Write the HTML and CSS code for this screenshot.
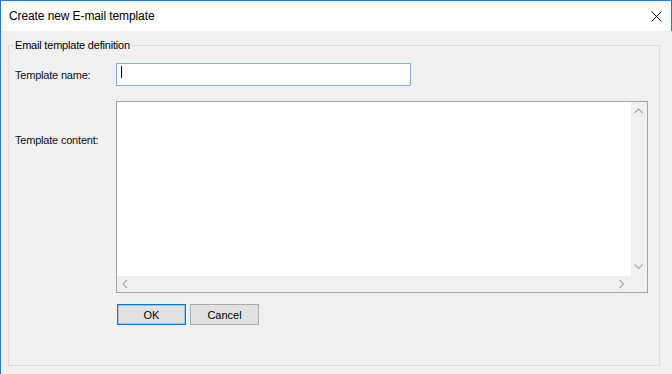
FILE: index.html
```html
<!DOCTYPE html>
<html lang="en">
<head>
  <meta charset="UTF-8">
  <meta name="viewport" content="width=device-width, initial-scale=1.0">
  <title>Create new E-mail template</title>
  <link rel="stylesheet" href="styles.css">
</head>
<body>
  <div class="window">
    <div class="titlebar">
      <span class="title">Create new E-mail template</span>
      <svg class="close" width="11" height="11" viewBox="0 0 11 11">
        <path d="M0.5 0.5 L10.5 10.5 M10.5 0.5 L0.5 10.5" stroke="#000" stroke-width="1" fill="none"/>
      </svg>
    </div>

    <div class="client">
      <div class="group">
        <div class="legend">Email template definition</div>

        <div class="form">
          <label class="label name-label" for="templateName">Template name:</label>
          <div class="textbox" id="templateName"><span class="caret"></span></div>

          <label class="label content-label">Template content:</label>
          <div class="editor">
            <div class="editor-text"></div>
            <div class="vscroll">
              <svg width="16" height="16" viewBox="0 0 16 16">
                <polyline points="3.5 11 7.5 7 11.5 11" class="arrow"/>
              </svg>
              <svg width="16" height="16" viewBox="0 0 16 16">
                <polyline points="3.5 4.5 7.5 8.5 11.5 4.5" class="arrow"/>
              </svg>
            </div>
            <div class="hscroll">
              <svg width="16" height="16" viewBox="0 0 16 16">
                <polyline points="10 4 6 8 10 12" class="arrow"/>
              </svg>
              <svg width="16" height="16" viewBox="0 0 16 16">
                <polyline points="4.5 4 8.5 8 4.5 12" class="arrow"/>
              </svg>
            </div>
            <div class="corner"></div>
          </div>

          <div class="buttons">
            <button class="btn btn-default">OK</button>
            <button class="btn">Cancel</button>
          </div>
        </div>
      </div>
    </div>
  </div>
</body>
</html>
```

FILE: styles.css
```css
* {
  margin: 0;
  padding: 0;
  box-sizing: border-box;
}

html, body {
  background-color: #f0f0f0;
}

body {
  font-family: "Segoe UI", "Liberation Sans", Arial, sans-serif;
  color: #000;
}

.window {
  width: 672px;
  height: 374px;
  border-top: 1px solid #1c7fd6;
  border-left: 1px solid #1c7fd6;
  display: flex;
  flex-direction: column;
}

.titlebar {
  height: 30px;
  background-color: #fff;
  border-right: 1px solid #1c7fd6;
  display: flex;
  align-items: center;
  justify-content: space-between;
  padding-left: 8px;
  padding-right: 9px;
}

.title {
  font-size: 12px;
  line-height: 16px;
  letter-spacing: -0.1px;
}

.close {
  display: block;
}

.client {
  flex: 1;
  display: flex;
  flex-direction: column;
  padding: 14px 12px 8px 7px;
}

.group {
  flex: 1;
  display: flex;
  flex-direction: column;
  border: 1px solid #dcdcdc;
}

.legend {
  align-self: flex-start;
  margin: -9px 0 0 4px;
  padding: 0 2px;
  background-color: #f0f0f0;
  font-size: 11px;
  line-height: 16px;
  letter-spacing: -0.2px;
}

.form {
  display: grid;
  grid-template-columns: 101px 532px;
  margin: 10px 0 0 6px;
}

.label {
  font-size: 11px;
  line-height: 16px;
  letter-spacing: -0.2px;
  color: #111;
}

.name-label {
  align-self: center;
}

.textbox {
  width: 295px;
  height: 23px;
  background-color: #fff;
  border: 1px solid #7ab4ea;
  padding: 2px 0 0 4px;
}

.caret {
  display: block;
  width: 1px;
  height: 12px;
  background-color: #000;
}

.content-label {
  align-self: start;
  margin-top: 46px;
}

.editor {
  margin-top: 15px;
  width: 532px;
  height: 192px;
  border: 1px solid #a5a5a5;
  display: grid;
  grid-template-columns: 1fr 16px;
  grid-template-rows: 1fr 16px;
}

.editor-text {
  background-color: #fff;
}

.vscroll {
  background-color: #f0f0f0;
  display: flex;
  flex-direction: column;
  justify-content: space-between;
}

.hscroll {
  background-color: #f0f0f0;
  display: flex;
  justify-content: space-between;
}

.vscroll svg,
.hscroll svg {
  display: block;
}

.arrow {
  fill: none;
  stroke: #ababab;
  stroke-width: 1.1;
}

.corner {
  background-color: #f0f0f0;
}

.buttons {
  grid-column: 2;
  display: flex;
  gap: 4px;
  margin: 11px 0 0 1px;
}

.btn {
  width: 69px;
  height: 21px;
  background-color: #e1e1e1;
  border: 1px solid #adadad;
  font-family: "Segoe UI", "Liberation Sans", Arial, sans-serif;
  font-size: 11px;
  color: #000;
}

.btn-default {
  border-color: #0078d7;
  box-shadow: inset 0 0 0 1px rgba(0, 120, 215, 0.3);
}
```
